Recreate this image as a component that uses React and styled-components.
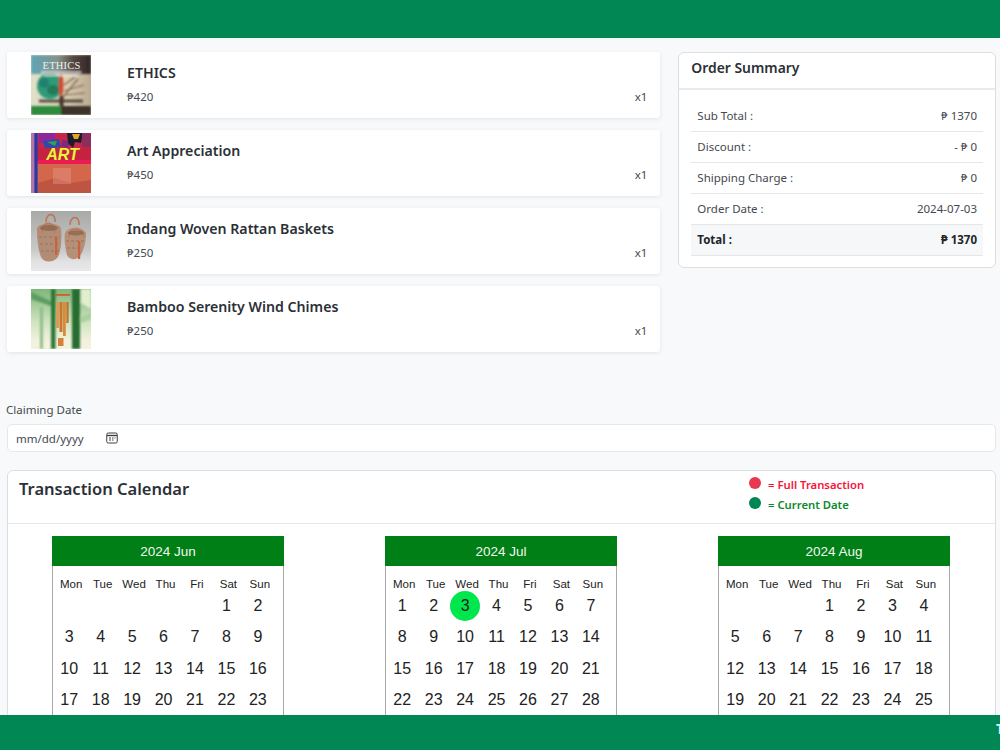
import React from "react";
import styled, { createGlobalStyle } from "styled-components";

const Global = createGlobalStyle`
  html, body { margin: 0; padding: 0; height: 100%; overflow: hidden; background: #f8f9fa; }
  body { font-family: "Noto Sans", "Open Sans", sans-serif; color: #212529; }
  * { box-sizing: border-box; }
`;

const Page = styled.div`
  height: 750px;
  overflow: hidden;
  display: flex;
  flex-direction: column;
`;
const TopBar = styled.header`
  height: 38px;
  flex: none;
  background: #008753;
`;
const BottomBar = styled.footer`
  position: fixed;
  left: 0;
  right: 0;
  bottom: 0;
  height: 35px;
  background: #008753;
  overflow: hidden;
  display: flex;
  justify-content: flex-start;
`;
const FooterText = styled.span`
  margin-left: 996px;
  margin-top: 4px;
  font-size: 14px;
  font-weight: 700;
  line-height: 20px;
  color: #d8f3ff;
  white-space: nowrap;
`;
const Main = styled.main`
  padding: 14px 4px 0 7px;
`;
const TopRow = styled.div`
  display: flex;
  gap: 18px;
  align-items: flex-start;
`;
const Items = styled.div`
  width: 654px;
  display: flex;
  flex-direction: column;
  gap: 12px;
`;
const Item = styled.div`
  height: 66px;
  background: #fff;
  border-radius: 3px;
  box-shadow: 0 1px 4px rgba(0, 0, 0, 0.09);
  display: flex;
  padding: 3px 13px 0 24px;
`;
const Cover = styled.div`
  width: 60px;
  height: 60px;
  flex: none;
  svg { display: block; }
`;
const ItemBody = styled.div`
  flex: 1;
  margin-left: 36px;
  min-width: 0;
`;
const ItemTitle = styled.div`
  font-size: 14.15px;
  line-height: 20px;
  font-weight: 600;
  margin-top: 8px;
  color: #2b3036;
`;
const ItemMeta = styled.div`
  display: flex;
  justify-content: space-between;
  margin-top: 4px;
  font-size: 11.5px;
  line-height: 20px;
  color: #44494f;
`;
const Summary = styled.section`
  width: 318px;
  height: 216px;
  background: #fff;
  border: 1px solid #dcdfe2;
  border-radius: 6px;
`;
const SummaryHead = styled.div`
  height: 37px;
  padding: 5px 12px 0;
  border-bottom: 2px solid #e8eaec;
  font-size: 13.9px;
  line-height: 20px;
  font-weight: 600;
  color: #2b3036;
`;
const SummaryRows = styled.div`
  padding: 11px 12px 0;
`;
const SummaryRow = styled.div`
  height: 31px;
  display: flex;
  justify-content: space-between;
  align-items: center;
  padding: 0 6px 2px;
  border-bottom: 1px solid #e4e6e8;
  font-size: 11.5px;
  color: ${(p) => (p.$total ? "#212529" : "#44494f")};
  font-weight: ${(p) => (p.$total ? 700 : 400)};
  background: ${(p) => (p.$total ? "#f6f7f9" : "transparent")};
`;
const DateBlock = styled.div`
  margin-top: 49px;
`;
const DateLabel = styled.label`
  display: block;
  margin-left: -1px;
  font-size: 11.5px;
  line-height: 18px;
  color: #44494f;
`;
const DateField = styled.div`
  margin-top: 5px;
  height: 28px;
  background: #fff;
  border: 1px solid #e6e8ea;
  border-radius: 5px;
  display: flex;
  align-items: center;
  padding-left: 8px;
  font-size: 11.5px;
  color: #44494f;
`;
const CalIcon = styled.svg`
  margin-left: 22px;
  margin-top: -1px;
`;
const CalendarCard = styled.section`
  margin-top: 18px;
  background: #fff;
  border: 1px solid #dcdfe2;
  border-radius: 6px 6px 0 0;
  height: 400px;
`;
const CardHead = styled.div`
  height: 53px;
  border-bottom: 1px solid #e4e6e8;
  display: flex;
  padding: 6px 12px 0 11px;
`;
const CardTitle = styled.h2`
  margin: 0;
  width: 730px;
  font-size: 16.5px;
  line-height: 23px;
  font-weight: 600;
  color: #2b3036;
`;
const Legend = styled.div`
  display: flex;
  flex-direction: column;
  gap: 4px;
`;
const LegendRow = styled.div`
  display: flex;
  align-items: flex-start;
  height: 16px;
  font-size: 11.3px;
  line-height: 16px;
  font-weight: 600;
  color: ${(p) => p.$text};
`;
const Dot = styled.span`
  width: 12px;
  height: 12px;
  border-radius: 50%;
  margin-right: 7px;
  background: ${(p) => p.$color};
`;
const Calendars = styled.div`
  display: flex;
  gap: 101px;
  padding: 12px 0 0 44px;
`;
const Month = styled.div`
  width: 232px;
  height: 300px;
  border: 1px solid #a9a9a9;
  border-top: none;
  font-family: "Liberation Sans", Arial, sans-serif;
`;
const MonthHead = styled.div`
  height: 30px;
  margin: 0 -1px;
  background: #007f16;
  color: #f2f8ef;
  font-size: 13.5px;
  line-height: 31px;
  text-align: center;
`;
const Weekdays = styled.div`
  display: grid;
  grid-template-columns: repeat(7, 31.45px);
  padding: 12px 0 0 2.5px;
  font-size: 11.5px;
  line-height: 13px;
  text-align: center;
  color: #222;
`;
const Days = styled.div`
  display: grid;
  grid-template-columns: repeat(7, 31.45px);
  grid-auto-rows: 31.5px;
  margin-top: -1px;
  padding-left: 0.5px;
  font-size: 16px;
  color: #222;
`;
const Day = styled.div`
  display: flex;
  align-items: center;
  justify-content: center;
  position: relative;
  z-index: 0;
  &::before {
    content: "";
    display: ${(p) => (p.$today ? "block" : "none")};
    position: absolute;
    z-index: -1;
    width: 30px;
    height: 30px;
    border-radius: 50%;
    background: #00e64d;
    left: 0.7px;
    top: 0.7px;
  }
`;

const Ethics = () => (
  <svg width="60" height="60" viewBox="0 0 60 60">
    <defs>
      <linearGradient id="e1" x1="0" x2="1" y1="0" y2="0">
        <stop offset="0" stopColor="#5fa6b6" /><stop offset="0.45" stopColor="#84928c" /><stop offset="0.7" stopColor="#56463f" /><stop offset="1" stopColor="#2f2527" />
      </linearGradient>
      <linearGradient id="e2" x1="0" x2="1" y1="0" y2="0">
        <stop offset="0" stopColor="#dfe0c9" /><stop offset="0.55" stopColor="#e0d3b4" /><stop offset="1" stopColor="#b9aa92" />
      </linearGradient>
      <filter id="eb" x="-10%" y="-10%" width="120%" height="120%"><feGaussianBlur stdDeviation="1" /></filter>
    </defs>
    <rect width="60" height="60" fill="url(#e2)" />
    <g filter="url(#eb)">
      <rect width="60" height="19" fill="url(#e1)" />
      <path d="M32 42 L47 24 M33 36 L53 30 M33 30 L44 22 M34 40 L54 38" stroke="#7a5f50" strokeWidth="1.2" fill="none" />
      <ellipse cx="19" cy="31" rx="13" ry="13" fill="#2f9a78" />
      <ellipse cx="13" cy="28" rx="5" ry="5" fill="#248070" />
      <ellipse cx="22" cy="35" rx="6" ry="5" fill="#247a58" />
      <ellipse cx="30" cy="30" rx="2.5" ry="12" fill="#cf4b36" />
      <rect x="28.5" y="41" width="4" height="11" fill="#4a3327" />
      <rect x="8" y="44.5" width="44" height="3" fill="#3d3733" opacity="0.85" />
      <rect x="0" y="51" width="30" height="9" fill="#2e8a3c" />
      <rect x="30" y="51" width="30" height="9" fill="#3a302b" />
      <rect x="10" y="16.5" width="40" height="1.5" fill="#f1f1ef" opacity="0.85" />
      <rect x="13" y="19.5" width="34" height="1.5" fill="#f1f1ef" opacity="0.85" />
    </g>
    <text x="30.5" y="14" textAnchor="middle" fontFamily="Liberation Serif, serif" fontSize="10.5" fill="#eef1f0" letterSpacing="0.2">ETHICS</text>
  </svg>
);
const Art = () => (
  <svg width="60" height="60" viewBox="0 0 60 60">
    <defs><filter id="ab" x="-10%" y="-10%" width="120%" height="120%"><feGaussianBlur stdDeviation="0.7" /></filter></defs>
    <rect width="60" height="60" fill="#cc5c48" />
    <g filter="url(#ab)">
      <rect width="60" height="29" fill="#c8284a" />
      <rect x="8" y="0" width="16" height="10" fill="#8b2a9c" />
      <path d="M12 8 L28 6 L30 14 L14 16 Z" fill="#2f48a8" />
      <path d="M16 9 L26 8 L24 13 Z" fill="#38a04e" />
      <path d="M32 6 L40 10 L36 15 L30 13 Z" fill="#7b2a80" />
      <path d="M36 0 L52 0 L50 10 L44 9 L42 15 L37 10 Z" fill="#1c1a2e" />
      <path d="M41 1 L49 1 L47 6 L43 6 Z" fill="#e6a61e" />
      <rect x="51" y="0" width="9" height="14" fill="#8a2f5c" />
      <rect x="6" y="15" width="54" height="13" fill="#c4243f" />
      <rect x="7" y="27" width="53" height="4.5" fill="#ea1c52" />
      <path d="M7 31 H60 V60 H7 Z" fill="#d4664c" />
      <path d="M7 50 L24 45 L40 50 L60 47 V60 H7 Z" fill="#bd5442" />
      <rect x="22" y="35" width="18" height="16" fill="#eaa698" opacity="0.35" />
      <rect x="0" y="0" width="3.5" height="60" fill="#b277a6" />
      <rect x="3.5" y="0" width="3" height="60" fill="#1d3ab4" />
    </g>
    <text x="31.5" y="26.5" textAnchor="middle" fontFamily="Liberation Sans, sans-serif" fontStyle="italic" fontWeight="700" fontSize="16" fill="#e9f53a">ART</text>
  </svg>
);
const Baskets = () => (
  <svg width="60" height="60" viewBox="0 0 60 60">
    <defs>
      <linearGradient id="b1" x1="0" x2="0" y1="0" y2="1">
        <stop offset="0" stopColor="#a9a9a7" /><stop offset="0.65" stopColor="#c9c9c8" /><stop offset="0.85" stopColor="#e2e2e4" /><stop offset="1" stopColor="#e9e9eb" />
      </linearGradient>
      <filter id="bb" x="-10%" y="-10%" width="120%" height="120%"><feGaussianBlur stdDeviation="0.6" /></filter>
    </defs>
    <rect width="60" height="60" fill="url(#b1)" />
    <g filter="url(#bb)">
      <path d="M6 17 C9 11 27 11 30 17 C31 28 30 40 27 46 C22 52 13 52 10 46 C7 38 6 28 6 17 Z" fill="#b28d74" />
      <path d="M34 22 C37 15 51 15 55 22 C55 32 52 42 48 46 C43 50 38 48 36 44 C34 36 33 28 34 22 Z" fill="#b58f76" />
      <path d="M8 26 H29 M9 33 H29 M10 40 H28 M35 30 H53 M36 37 H51" stroke="#a07c64" strokeWidth="1.5" strokeDasharray="3 2" />
      <path d="M15 11 C15 1 25 1 24 11" fill="none" stroke="#bb7356" strokeWidth="1.5" />
      <path d="M39 14 C39 4 49 4 48 14" fill="none" stroke="#bb7356" strokeWidth="1.5" />
      <path d="M11 22 C10 9 24 9 24 22" fill="none" stroke="#c07b5c" strokeWidth="1.8" />
      <path d="M38 26 C38 15 52 16 53 26" fill="none" stroke="#c07b5c" strokeWidth="1.8" />
      <ellipse cx="18" cy="17" rx="9" ry="3" fill="#7d5a46" opacity="0.6" />
      <ellipse cx="45" cy="22" rx="8" ry="2.5" fill="#7d5a46" opacity="0.6" />
      <rect x="24" y="26" width="2.2" height="18" fill="#c8623f" />
      <rect x="47" y="30" width="2.2" height="18" fill="#c8623f" />
    </g>
  </svg>
);
const Chimes = () => (
  <svg width="60" height="60" viewBox="0 0 60 60">
    <defs>
      <linearGradient id="c1" x1="0" x2="0" y1="0" y2="1">
        <stop offset="0" stopColor="#7fb67a" /><stop offset="0.55" stopColor="#cfe4c0" /><stop offset="0.88" stopColor="#f4f2de" />
      </linearGradient>
      <filter id="cb" x="-10%" y="-10%" width="120%" height="120%"><feGaussianBlur stdDeviation="1.2" /></filter>
      <filter id="cs" x="-10%" y="-10%" width="120%" height="120%"><feGaussianBlur stdDeviation="0.35" /></filter>
    </defs>
    <rect width="60" height="60" fill="url(#c1)" />
    <g filter="url(#cb)">
      <path d="M50 0 H60 V20 L50 14 Z" fill="#e2efcf" />
      <path d="M0 3 L20 12 L20 17 L0 10 Z" fill="#5c9d60" />
      <rect x="9" y="18" width="3" height="42" fill="#8fbe88" />
      <rect x="20" y="0" width="4.5" height="60" fill="#2a7636" />
      <rect x="41" y="0" width="8" height="60" fill="#256d30" />
      <path d="M49 28 L60 24 L60 30 L50 34 Z" fill="#a9d09c" />
    </g>
    <g filter="url(#cs)">
      <rect x="24" y="5" width="15" height="1.8" fill="#d45a2a" />
      <rect x="25" y="13" width="3" height="26" fill="#dc9a52" />
      <rect x="28.5" y="13" width="3" height="30" fill="#c8772f" />
      <rect x="32" y="13" width="2.8" height="34" fill="#d98a3c" />
      <rect x="35.3" y="13" width="2.4" height="21" fill="#c4742e" />
      <rect x="27" y="49" width="5.5" height="8" fill="#d77f3a" />
    </g>
  </svg>
);

const books = [
  { title: "ETHICS", price: "₱420", art: <Ethics /> },
  { title: "Art Appreciation", price: "₱450", art: <Art /> },
  { title: "Indang Woven Rattan Baskets", price: "₱250", art: <Baskets /> },
  { title: "Bamboo Serenity Wind Chimes", price: "₱250", art: <Chimes /> },
];
const summary = [
  ["Sub Total :", "₱ 1370"],
  ["Discount :", "- ₱ 0"],
  ["Shipping Charge :", "₱ 0"],
  ["Order Date :", "2024-07-03"],
];
const weekdays = ["Mon", "Tue", "Wed", "Thu", "Fri", "Sat", "Sun"];
const months = [
  { name: "2024 Jun", blank: 5, days: 23 },
  { name: "2024 Jul", blank: 0, days: 28, today: 3 },
  { name: "2024 Aug", blank: 3, days: 25 },
];

export default function App() {
  return (
    <Page>
      <Global />
      <TopBar />
      <Main>
        <TopRow>
          <Items>
            {books.map((b) => (
              <Item key={b.title}>
                <Cover>{b.art}</Cover>
                <ItemBody>
                  <ItemTitle>{b.title}</ItemTitle>
                  <ItemMeta><span>{b.price}</span><span>x1</span></ItemMeta>
                </ItemBody>
              </Item>
            ))}
          </Items>
          <Summary>
            <SummaryHead>Order Summary</SummaryHead>
            <SummaryRows>
              {summary.map(([k, v]) => (
                <SummaryRow key={k}><span>{k}</span><span>{v}</span></SummaryRow>
              ))}
              <SummaryRow $total><span>Total :</span><span>₱ 1370</span></SummaryRow>
            </SummaryRows>
          </Summary>
        </TopRow>
        <DateBlock>
          <DateLabel>Claiming Date</DateLabel>
          <DateField>
            mm/dd/yyyy
            <CalIcon width="12" height="12" viewBox="0 0 12 12" fill="none" stroke="#3a3f44">
              <rect x="0.75" y="1" width="10.5" height="10" rx="1.5" strokeWidth="1" />
              <path d="M1 3.5 H11" strokeWidth="1.4" />
              <path d="M3 6 H5 M6 6 H7.5 M8.5 6 H9.5 M3 8 H5 M6 8 H7.5" strokeWidth="1" />
            </CalIcon>
          </DateField>
        </DateBlock>
        <CalendarCard>
          <CardHead>
            <CardTitle>Transaction Calendar</CardTitle>
            <Legend>
              <LegendRow $text="#f5143c"><Dot $color="#e8374f" />= Full Transaction</LegendRow>
              <LegendRow $text="#0b8a2e"><Dot $color="#008753" />= Current Date</LegendRow>
            </Legend>
          </CardHead>
          <Calendars>
            {months.map((m) => (
              <Month key={m.name}>
                <MonthHead>{m.name}</MonthHead>
                <Weekdays>{weekdays.map((d) => <span key={d}>{d}</span>)}</Weekdays>
                <Days>
                  {Array.from({ length: m.blank }, (_, i) => <span key={"b" + i} />)}
                  {Array.from({ length: m.days }, (_, i) => (
                    <Day key={i} $today={m.today === i + 1}>{i + 1}</Day>
                  ))}
                </Days>
              </Month>
            ))}
          </Calendars>
        </CalendarCard>
      </Main>
      <BottomBar><FooterText>T</FooterText></BottomBar>
    </Page>
  );
}
